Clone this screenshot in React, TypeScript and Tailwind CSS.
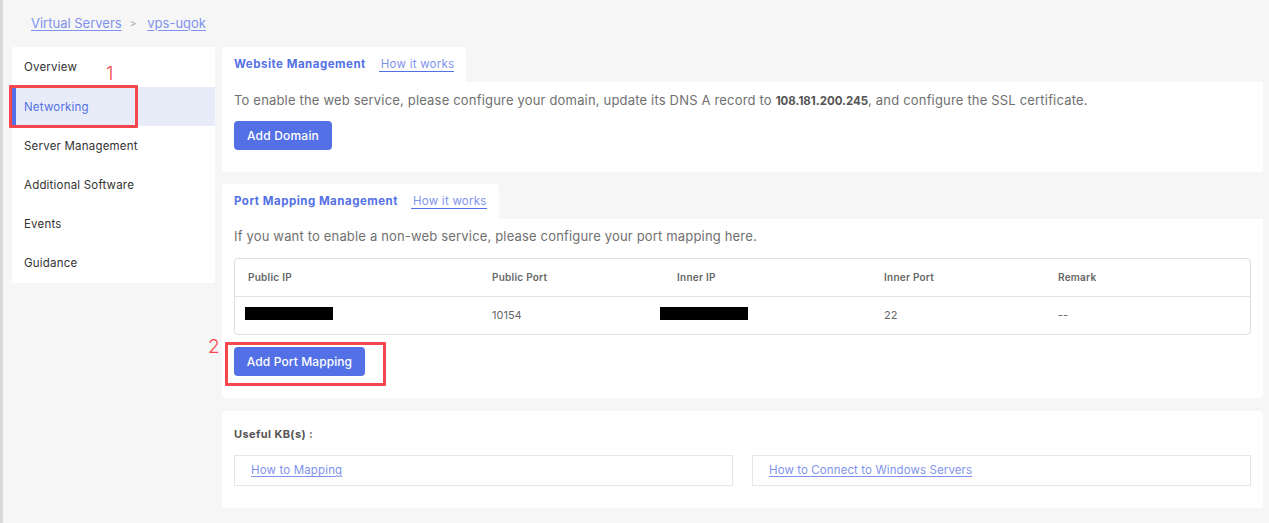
const menu = ['Overview', 'Networking', 'Server Management', 'Additional Software', 'Events', 'Guidance'];

const font = { fontFamily: 'Inter, "Noto Sans", sans-serif' };

function Tab({ title, width }: { title: string; width: string }) {
  return (
    <div className={`flex h-[35px] items-center rounded-t bg-white pl-3 text-[11.5px] ${width}`}>
      <span className="font-bold tracking-[0.5px] text-[#5470e6]">{title}</span>
      <a className="ml-[13px] border-b border-[#5470e6] pl-0.5 leading-[13px] tracking-[0.25px] text-[#7f93ee]">How it works</a>
    </div>
  );
}

function Redacted() {
  return <div className="-mt-[4px] h-[13px] w-[88px] bg-black" />;
}

export default function App() {
  return (
    <div style={font} className="relative h-[523px] w-[1269px] overflow-hidden border-l-[3px] border-[#d9d9d9] bg-[#f6f6f6]">
      <div className="flex h-[47px] items-center pl-[28px] text-[13px] text-[#7f93ee]">
        <a className="underline underline-offset-2">Virtual Servers</a>
        <span className="ml-2 mr-[11px] text-[10px] text-gray-400">&gt;</span>
        <a className="underline underline-offset-2">vps-uqok</a>
      </div>
      <div className="flex items-start gap-[7px] pl-[9px]">
        <ul className="h-[236px] w-[203px] bg-white pt-px">
          {menu.map((m) =>
            m === 'Networking' ? (
              <li key={m} className="flex h-[39.2px] items-center border-l-[4px] border-[#5470e6] bg-[#e8ecf9] pl-2 pt-px text-[11.5px] tracking-[0.2px] text-[#5470e6]">
                {m}
              </li>
            ) : (
              <li key={m} className="flex h-[39.2px] items-center pl-3 pt-px text-[11.5px] tracking-[0.2px] text-[#333]">
                {m}
              </li>
            )
          )}
        </ul>
        <div className="flex w-[1041px] flex-col">
          <Tab title="Website Management" width="w-[244px]" />
          <div className="h-[90px] rounded-b bg-white px-3 pt-2">
            <p className="text-[13px] leading-5 tracking-[0.18px] text-[#707070]">
              To enable the web service, please configure your domain, update its DNS A record to{' '}
              <b className="text-[11.5px] font-bold tracking-normal text-[#555]">108.181.200.245</b>, and configure the SSL certificate.
            </p>
            <button className="mt-[10px] h-[29px] w-[98px] rounded-sm bg-[#5470e6] text-[12px] font-medium tracking-[0.2px] text-white">Add Domain</button>
          </div>

          <div className="mt-3">
            <Tab title="Port Mapping Management" width="w-[277px]" />
          </div>
          <div className="h-[179px] rounded-b bg-white px-3 pt-[7px]">
            <p className="text-[13px] leading-5 tracking-[0.17px] text-[#707070]">If you want to enable a non-web service, please configure your port mapping here.</p>
            <div className="mt-3 rounded-sm border border-[#dedede] text-[#666]">
              <div className="grid h-[38px] grid-cols-[244px_185px_207px_174px_1fr] items-center border-b border-[#e4e4e4] pl-[13px] text-[10px] font-semibold tracking-[0.25px]">
                <span>Public IP</span>
                <span>Public Port</span>
                <span>Inner IP</span>
                <span>Inner Port</span>
                <span>Remark</span>
              </div>
              <div className="grid h-[37px] grid-cols-[244px_185px_207px_174px_1fr] items-center pl-[13px] text-[11px]">
                <div className="-ml-[3px]"><Redacted /></div>
                <span>10154</span>
                <div className="-ml-[17px]"><Redacted /></div>
                <span>22</span>
                <span>--</span>
              </div>
            </div>
            <button className="mt-3 h-[29px] w-[131px] rounded-sm bg-[#5470e6] text-[12px] font-medium tracking-[0.1px] text-white">Add Port Mapping</button>
          </div>

          <div className="mt-[13px] h-[97px] rounded bg-white px-3 pt-[15px]">
            <p className="text-[11px] font-bold leading-4 tracking-[0.4px] text-[#555]">Useful KB(s) :</p>
            <div className="mt-[13px] grid grid-cols-2 gap-[19px]">
              <div className="flex h-[31px] items-center border border-[#e6e6e6] pl-4 text-[11.5px] tracking-[0.15px] text-[#7f93ee]"><a className="underline underline-offset-2">How to Mapping</a></div>
              <div className="flex h-[31px] items-center border border-[#e6e6e6] pl-4 text-[11.5px] tracking-[0.1px] text-[#7f93ee]"><a className="underline underline-offset-2">How to Connect to Windows Servers</a></div>
            </div>
          </div>
        </div>
      </div>

      <div className="absolute left-[6px] top-[85px] h-[43px] w-[129px] rounded-[1px] border-[3px] border-[#f5474d]" />
      <div className="absolute left-[222px] top-[342px] h-[44px] w-[161px] rounded-[1px] border-[3px] border-[#f5474d]" />
      <span className="absolute left-[103px] top-[63px] text-[19px] font-light leading-[22px] text-[#f5474d]">1</span>
      <span className="absolute left-[205px] top-[336px] text-[19px] font-light leading-[22px] text-[#f5474d]">2</span>
    </div>
  );
}
